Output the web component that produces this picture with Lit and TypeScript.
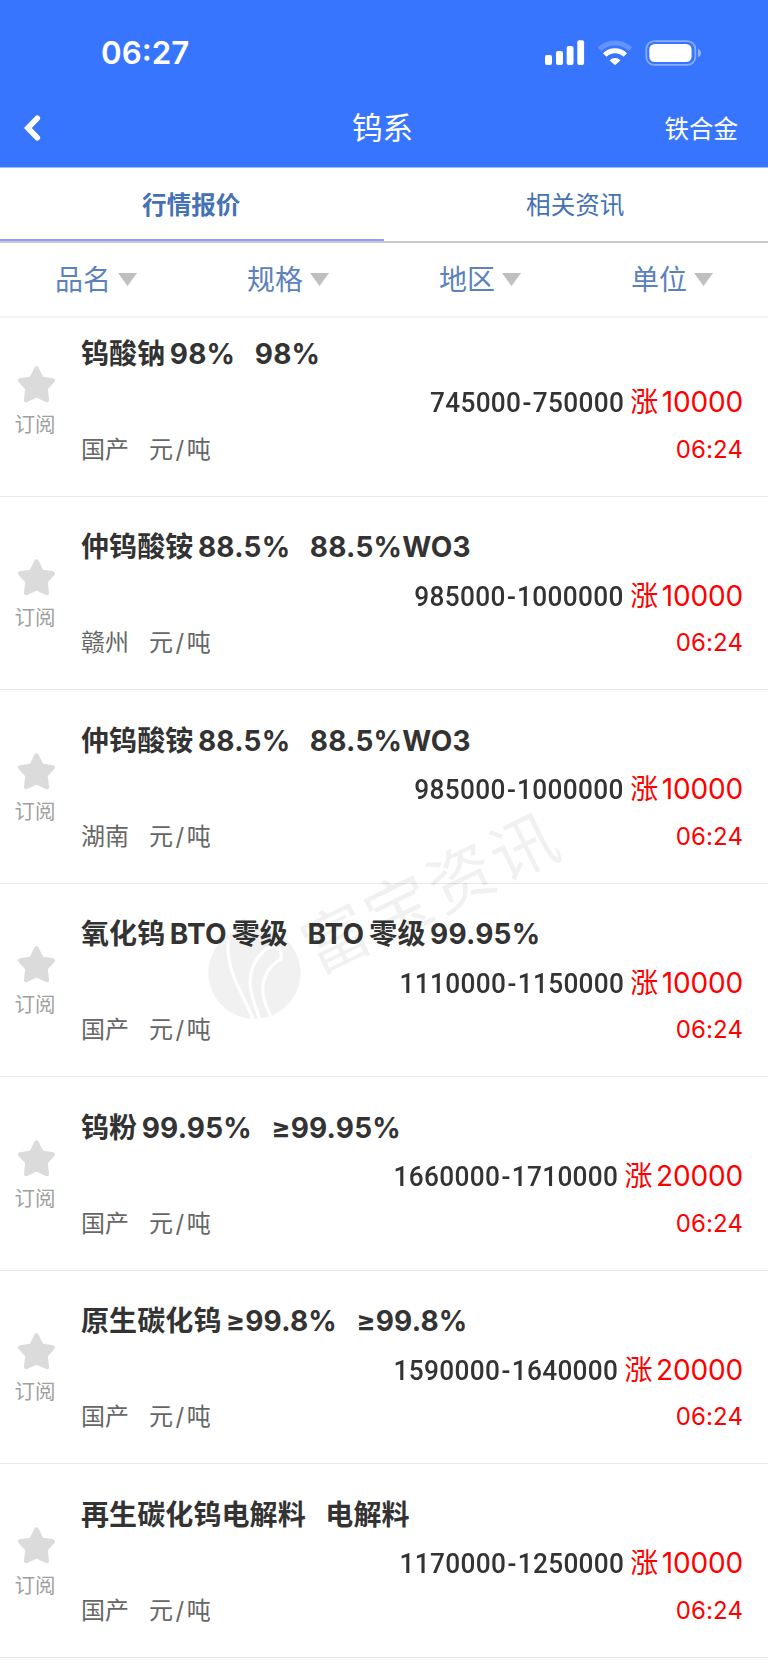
import { LitElement, html, css } from "lit";
import { customElement, property } from "lit/decorators.js";

interface Quote {
  name: string;
  spec: string;
  area: string;
  price: string;
  change: string;
}

const QUOTES: Quote[] = [
  { name: "钨酸钠98%", spec: "98%", area: "国产", price: "745000-750000", change: "10000" },
  { name: "仲钨酸铵88.5%", spec: "88.5%WO3", area: "赣州", price: "985000-1000000", change: "10000" },
  { name: "仲钨酸铵88.5%", spec: "88.5%WO3", area: "湖南", price: "985000-1000000", change: "10000" },
  { name: "氧化钨BTO零级", spec: "BTO零级99.95%", area: "国产", price: "1110000-1150000", change: "10000" },
  { name: "钨粉99.95%", spec: "≥99.95%", area: "国产", price: "1660000-1710000", change: "20000" },
  { name: "原生碳化钨≥99.8%", spec: "≥99.8%", area: "国产", price: "1590000-1640000", change: "20000" },
  { name: "再生碳化钨电解料", spec: "电解料", area: "国产", price: "1170000-1250000", change: "10000" },
];

/** Splits mixed text so that Latin runs get a little air beside Chinese ones. */
const runs = (text: string) =>
  (text.match(/[\u4e00-\u9fff]+|[^\u4e00-\u9fff]+/g) ?? []).map(
    (part) => html`<span class=${/[\u4e00-\u9fff]/.test(part) ? "han" : "latin"}>${part}</span>`
  );

@customElement("quote-row")
export class QuoteRow extends LitElement {
  @property({ attribute: false }) quote!: Quote;

  static styles = css`
    :host { display: grid; grid-template-columns: 81px 1fr; height: 193.5px; box-sizing: border-box;
      border-bottom: 1.5px solid #e6e6e6; overflow: hidden; }
    .sub { display: flex; flex-direction: column; align-items: center; padding: 62.5px 9px 0 0; color: #a0a0a0; font-size: 20.5px; line-height: 30px; }
    .sub svg { width: 37px; height: 37px; display: block; margin-bottom: 7px; }
    .sub span { margin-right: 2px; }
    .body { padding: 33.5px 25px 0 0; }
    .title { display: flex; gap: 19.5px; height: 34px; line-height: 34px; font-size: 28px; font-weight: 700; color: #333; white-space: nowrap; letter-spacing: 0.1px; }
    .title .latin { font-weight: 670; letter-spacing: 0.2px; }
    .han + .latin { margin-left: 4.5px; }
    .latin + .han { margin-left: 5px; }
    .price { display: flex; justify-content: flex-end; align-items: baseline; height: 34px; line-height: 34px; margin-top: 14.5px; white-space: nowrap; }
    .num { display: inline-block; font: 500 28.5px/34px Roboto, sans-serif; color: #333; letter-spacing: 0.37px; transform: scaleX(0.92); transform-origin: 100% 50%; }
    .dash { display: inline-block; width: 12.4px; text-align: center; letter-spacing: 0; }
    .up { color: #f00; font-size: 28px; margin-left: 6px; }
    .up .latin { margin-left: 3.5px; letter-spacing: -0.15px; }
    .foot { display: flex; justify-content: space-between; align-items: baseline; height: 34px; line-height: 34px; margin-top: 13.5px; font-size: 24px; }
    .meta { color: #666; display: flex; gap: 20px; }
    .slash { margin: 0 2.5px; }
    .time { color: #f00; letter-spacing: 0.1px; }
  `;

  render() {
    const q = this.quote;
    const [low, high] = q.price.split("-");
    return html`
      <div class="sub">
        <svg viewBox="0 0 37 37"><path fill="#dbdbdb" stroke="#dbdbdb" stroke-width="4.5" stroke-linejoin="round"
          d="M18.5 2.5 23.5 12.7 34.7 14.4 27.5 22.5 28.8 34 18.5 29.3 8.2 34 9.5 22.5 2.3 14.4 13.5 12.7Z"/></svg>
        <span>订阅</span>
      </div>
      <div class="body">
        <div class="title"><div>${runs(q.name)}</div><div>${runs(q.spec)}</div></div>
        <div class="price"><span class="num">${low}<span class="dash">-</span>${high}</span><span class="up">${runs("涨" + q.change)}</span></div>
        <div class="foot"><div class="meta"><span>${q.area}</span><span>元<span class="slash">/</span>吨</span></div><span class="time">06:24</span></div>
      </div>`;
  }
}

@customElement("app-root")
export class AppRoot extends LitElement {
  static styles = css`
    :host { display: block; position: relative; width: 768px; height: 1665px; overflow: hidden; background: #fff;
      font-family: Inter, "Noto Sans CJK SC", sans-serif; }
    header { height: 167px; background: #3875ff; border-bottom: 1px solid #9dbcff; box-sizing: content-box; color: #fff; display: flex; flex-direction: column; }
    .status { height: 92px; display: flex; justify-content: space-between; padding: 13px 66px 0 101px; box-sizing: border-box; align-items: center; }
    .clock { font-size: 31.3px; font-weight: 560; line-height: 40px; }
    .status svg { width: 158px; height: 28px; display: block; }
    .nav { height: 75px; display: grid; grid-template-columns: 1fr auto 1fr; align-items: center; padding: 0 30px 4px 24px; box-sizing: border-box; }
    .nav svg { width: 18px; height: 26px; display: block; }
    .nav h1 { margin: 1px -3px 0 0; font-size: 30.5px; font-weight: 400; line-height: 40px; }
    .link { font-size: 24.5px; text-align: right; }
    .tabs { height: 75px; box-sizing: border-box; display: grid; grid-template-columns: 1fr 1fr; border-bottom: 2px solid #c9c9c9; color: #4571b5; font-size: 24.6px; text-align: center; line-height: 74px; }
    .tab { box-sizing: border-box; height: 73px; padding-right: 1.5px; }
    .active { font-weight: 700; border-bottom: 2px solid #9797ff; }
    .filters { height: 75px; box-sizing: border-box; display: grid; grid-template-columns: repeat(4, 1fr); border-bottom: 2px solid #f5f5f5; color: #5b82bd; font-size: 28px; }
    .filter { display: flex; align-items: center; justify-content: center; gap: 7px; }
    .filter span { margin-top: -4px; }
    .filter svg { width: 19px; height: 13px; }
    .list { margin-top: -15px; }
    .mark { position: absolute; left: 190px; top: 790px; width: 384px; height: 260px; pointer-events: none; overflow: visible; }
  `;

  render() {
    return html`
      <header>
        <div class="status">
          <span class="clock">06:27</span>
          <svg viewBox="0 0 158 28" fill="#fff">
            <rect x="1" y="16" width="7" height="10" rx="2"/><rect x="12" y="12" width="7" height="14" rx="2"/>
            <rect x="22.7" y="7" width="6.8" height="19" rx="2"/><rect x="33.3" y="1.3" width="6.8" height="24.7" rx="2"/>
            <g fill="none" stroke="#fff" stroke-width="5">
              <path opacity=".22" d="M55.5 10.3a22 22 0 0 1 31 0"/>
              <path d="M60.7 15.9a14.6 14.6 0 0 1 20.6 0"/>
            </g>
            <path d="M65.5 21.2a7.8 7.8 0 0 1 11 0L71 26.3Z"/>
            <rect x="102.3" y="2.1" width="49" height="23.8" rx="8" fill="none" stroke="#fff" stroke-width="1.8" opacity=".4"/>
            <rect x="105.3" y="5" width="42.3" height="18" rx="5.5"/>
            <path opacity=".45" d="M154 9.8c4 1.5 4 7 0 8.5Z"/>
          </svg>
        </div>
        <div class="nav">
          <svg viewBox="0 0 18 26" fill="none" stroke="#fff" stroke-width="5.6"><path stroke-linecap="round" d="M13.3 3.3 3.8 13 13.3 22.7"/></svg>
          <h1>钨系</h1>
          <span class="link">铁合金</span>
        </div>
      </header>
      <div class="tabs"><div class="tab active">行情报价</div><div class="tab">相关资讯</div></div>
      <div class="filters">
        ${["品名", "规格", "地区", "单位"].map(
          (f) => html`<div class="filter"><span>${f}</span><svg viewBox="0 0 19 13"><path fill="#c1bfbf" d="M0 0H19L9.5 13Z"/></svg></div>`
        )}
      </div>
      <div class="list">${QUOTES.map((q) => html`<quote-row .quote=${q}></quote-row>`)}</div>
      <svg class="mark" viewBox="0 0 384 260" opacity=".05">
        <defs>
          <mask id="leaves">
            <rect width="384" height="260" fill="#fff"/>
            <g fill="none" stroke="#000" stroke-width="3" stroke-linecap="round">
              <path d="M38 150C36 185 54 203 64 232"/>
              <path d="M87 154C74 157 60 172 60 193C61 209 67 221 71 232"/>
              <path d="M91 169C76 178 72 190 73 203C74 215 80 222 82 231"/>
              <path d="M85 156C91 158 92 163 91 169"/>
            </g>
          </mask>
        </defs>
        <path mask="url(#leaves)" d="M64.5 229a46 46 0 0 1-22-86.500q6-4 11-15 5 9 11 9.500a46 46 0 0 1 0 92Z"/>
        <text transform="translate(145 147) rotate(-26)" x="-33" y="26" font-size="66" letter-spacing="3.5" font-weight="400">富宝资讯</text>
      </svg>`;
  }
}
